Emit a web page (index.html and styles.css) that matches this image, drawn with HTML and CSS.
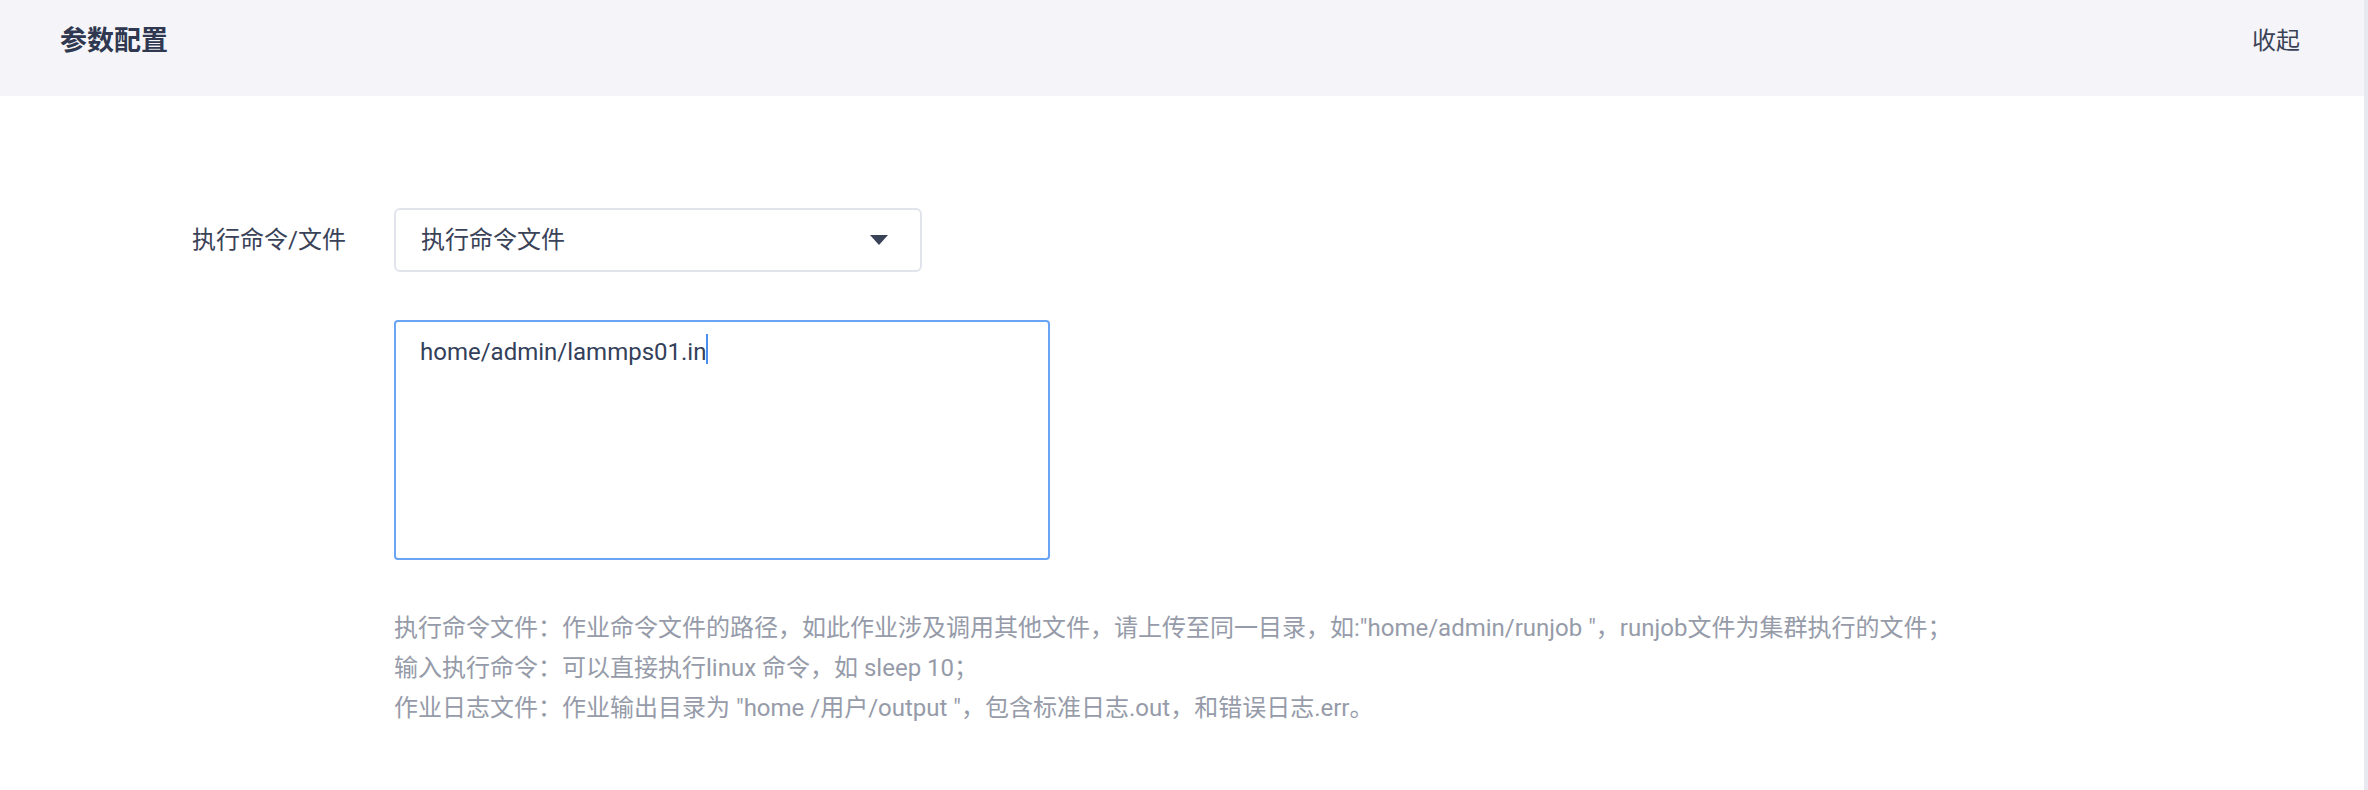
FILE: index.html
```html
<!DOCTYPE html>
<html lang="zh">
<head>
<meta charset="utf-8">
<title>参数配置</title>
<link rel="stylesheet" href="styles.css">
</head>
<body>
<div class="page">
  <div class="main">
    <div class="header">
      <div class="title">参数配置</div>
      <div class="collapse">收起</div>
    </div>
    <div class="form">
      <div class="label">执行命令/文件</div>
      <div class="select">
        <span class="select-text">执行命令文件</span>
        <span class="arrow"></span>
      </div>
      <div class="spacer"></div>
      <div class="textarea"><span class="ta-text">home/admin/lammps01.in</span><span class="caret"></span></div>
      <div class="spacer"></div>
      <div class="help">
        <div class="help-line">执行命令文件：作业命令文件的路径，如此作业涉及调用其他文件，请上传至同一目录，如:"home/admin/runjob "，runjob文件为集群执行的文件；</div>
        <div class="help-line">输入执行命令：可以直接执行linux 命令，如 sleep 10；</div>
        <div class="help-line">作业日志文件：作业输出目录为 "home /用户/output "，包含标准日志.out，和错误日志.err。</div>
      </div>
    </div>
  </div>
  <div class="scrollbar"></div>
</div>
</body>
</html>
```
FILE: styles.css
```css
html, body {
  margin: 0;
  padding: 0;
  background: #ffffff;
}
body {
  font-family: Roboto, "Noto Sans CJK SC", sans-serif;
  color: #3a4257;
}
.page {
  display: flex;
  width: 2368px;
  height: 790px;
  overflow: hidden;
}
.main {
  flex: 1;
  display: flex;
  flex-direction: column;
}
.scrollbar {
  width: 4px;
  background: #e8e8f0;
}
.header {
  box-sizing: border-box;
  height: 96px;
  background: #f5f5f9;
  display: flex;
  justify-content: space-between;
  align-items: flex-start;
  padding: 22px 64px 0 60px;
}
.title {
  font-size: 27px;
  line-height: 38px;
  font-weight: 700;
  color: #2f3850;
}
.collapse {
  font-size: 24px;
  line-height: 38px;
  color: #3a4257;
}
.form {
  display: grid;
  grid-template-columns: 346px 1fr;
  column-gap: 48px;
  align-items: center;
  padding-top: 112px;
}
.label {
  text-align: right;
  font-size: 24px;
  line-height: 36px;
  color: #3a4257;
}
.select {
  box-sizing: border-box;
  width: 528px;
  height: 64px;
  border: 2px solid #e1e4eb;
  border-radius: 6px;
  display: flex;
  align-items: center;
  justify-content: space-between;
  padding: 0 32px 0 25px;
}
.select-text {
  font-size: 24px;
  line-height: 36px;
  color: #3a4257;
}
.arrow {
  width: 0;
  height: 0;
  border-left: 9px solid transparent;
  border-right: 9px solid transparent;
  border-top: 10px solid #3a4257;
}
.spacer {
  height: 48px;
}
.textarea {
  box-sizing: border-box;
  grid-column: 2;
  width: 656px;
  height: 240px;
  border: 2px solid #6aa5f5;
  border-radius: 4px;
  padding: 12px 24px;
  font-size: 24px;
  line-height: 36px;
  color: #33405a;
  align-self: start;
}
.form > .spacer:nth-of-type(1) {
  grid-column: 1 / 3;
}
.form > .spacer {
  grid-column: 1 / 3;
}
.form > .spacer:last-of-type {
  height: 45px;
}
.ta-text {
  vertical-align: top;
}
.caret {
  display: inline-block;
  width: 2px;
  height: 30px;
  margin-top: 0px;
  vertical-align: top;
  background: #4a8ef0;
}
.help {
  grid-column: 2;
  font-size: 24px;
  line-height: 40px;
  color: #969ba9;
}
.help-line {
  white-space: nowrap;
}
```
